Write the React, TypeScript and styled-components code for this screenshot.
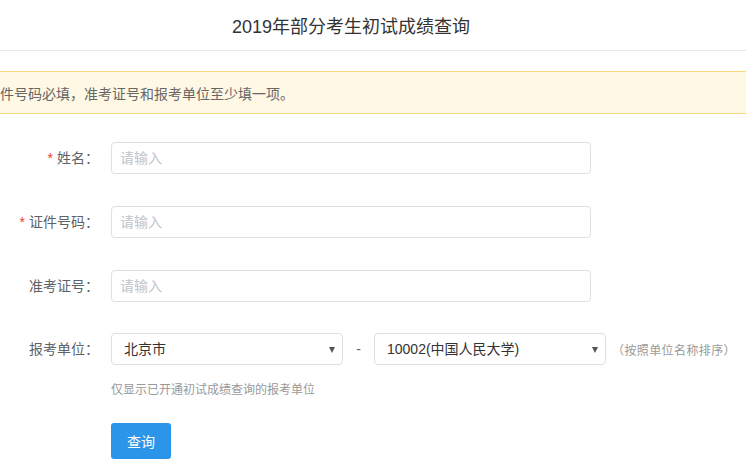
import React, { useState } from 'react'
import styled, { createGlobalStyle } from 'styled-components'

const FONT = '"Liberation Sans", "Noto Sans CJK SC", sans-serif'

const GlobalStyle = createGlobalStyle`
  html, body {
    margin: 0;
    padding: 0;
    background: #fff;
    overflow: hidden;
  }
  body {
    font-family: ${FONT};
    color: #333;
  }
`

const Page = styled.div`
  width: 746px;
  min-height: 469px;
  overflow: hidden;
`

const Header = styled.div`
  height: 50px;
  padding-right: 44px;
  border-bottom: 1px solid #e6e6e6;
  display: flex;
  align-items: center;
  justify-content: center;
  font-size: 18px;
  color: #333;
`

const Alert = styled.div`
  margin: 20px -40px 28px -73px;
  height: 41px;
  padding: 0 16px;
  display: flex;
  align-items: center;
  background: #fff8e5;
  border: 1px solid #f9d680;
  font-size: 14px;
  color: #666;
  white-space: nowrap;
`

const Form = styled.form`
  display: flex;
  flex-direction: column;
`

const Row = styled.div<{ $gap?: number }>`
  display: flex;
  align-items: center;
  margin-bottom: ${({ $gap }) => ($gap ?? 32)}px;
`

const Label = styled.label`
  width: 99px;
  margin-right: 12px;
  flex-shrink: 0;
  text-align: right;
  font-size: 14px;
  line-height: 20px;
  color: #606266;
  white-space: nowrap;
`

const Star = styled.span`
  color: #e8431f;
  margin-right: 4px;
  font-family: "Liberation Sans", sans-serif;
`

const Input = styled.input`
  box-sizing: border-box;
  width: 480px;
  height: 32px;
  padding: 0 8px;
  border: 1px solid #dcdfe6;
  border-radius: 4px;
  font-family: ${FONT};
  font-size: 14px;
  color: #333;
  outline: none;
  &::placeholder {
    color: #c0c4cc;
  }
`

const SelectWrap = styled.div`
  position: relative;
  width: 232px;
  height: 32px;
`

const Select = styled.select`
  box-sizing: border-box;
  width: 100%;
  height: 100%;
  padding: 0 24px 0 12px;
  border: 1px solid #dcdfe6;
  border-radius: 4px;
  background: #fff;
  appearance: none;
  font-family: ${FONT};
  font-size: 14px;
  color: #333;
  outline: none;
`

const Arrow = styled.span`
  position: absolute;
  right: 8px;
  top: 14px;
  width: 0;
  height: 0;
  border-left: 3px solid transparent;
  border-right: 3px solid transparent;
  border-top: 6px solid #555;
  pointer-events: none;
`

const Dash = styled.span`
  width: 31px;
  text-align: center;
  font-size: 14px;
  color: #666;
`

const Note = styled.span`
  margin-left: 6px;
  font-size: 12px;
  letter-spacing: 0.4px;
  color: #999;
  white-space: nowrap;
`

const Hint = styled.div`
  margin: -16px 0 24px 111px;
  font-size: 12px;
  line-height: 18px;
  color: #999;
`

const Button = styled.button`
  margin-left: 111px;
  width: 60px;
  height: 36px;
  border: none;
  border-radius: 3px;
  background: #2b95e9;
  color: #fff;
  font-family: ${FONT};
  font-size: 14px;
  cursor: pointer;
`

const provinces = ['北京市', '天津市', '上海市']
const units = ['10002(中国人民大学)', '10001(北京大学)', '10003(清华大学)']

export default function App() {
  const [province, setProvince] = useState(provinces[0])
  const [unit, setUnit] = useState(units[0])

  return (
    <Page>
      <GlobalStyle />
      <Header>2019年部分考生初试成绩查询</Header>
      <Alert>姓名、证件号码必填，准考证号和报考单位至少填一项。</Alert>
      <Form onSubmit={e => e.preventDefault()}>
        <Row>
          <Label>
            <Star>*</Star>姓名：
          </Label>
          <Input placeholder="请输入" />
        </Row>
        <Row>
          <Label>
            <Star>*</Star>证件号码：
          </Label>
          <Input placeholder="请输入" />
        </Row>
        <Row $gap={31}>
          <Label>准考证号：</Label>
          <Input placeholder="请输入" />
        </Row>
        <Row>
          <Label>报考单位：</Label>
          <SelectWrap>
            <Select value={province} onChange={e => setProvince(e.target.value)}>
              {provinces.map(p => (
                <option key={p}>{p}</option>
              ))}
            </Select>
            <Arrow />
          </SelectWrap>
          <Dash>-</Dash>
          <SelectWrap>
            <Select value={unit} onChange={e => setUnit(e.target.value)}>
              {units.map(u => (
                <option key={u}>{u}</option>
              ))}
            </Select>
            <Arrow />
          </SelectWrap>
          <Note>（按照单位名称排序）</Note>
        </Row>
        <Hint>仅显示已开通初试成绩查询的报考单位</Hint>
        <Button type="submit">查询</Button>
      </Form>
    </Page>
  )
}
